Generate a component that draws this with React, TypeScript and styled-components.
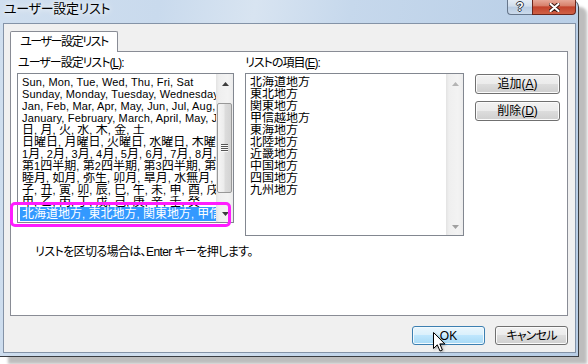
import React from "react";
import styled, { createGlobalStyle } from "styled-components";

const GlobalStyle = createGlobalStyle`
  html, body { margin: 0; padding: 0; background: #ffffff; }
  body {
    font-family: "Liberation Sans", "Noto Sans CJK JP", sans-serif;
    font-size: 12px;
    font-feature-settings: "palt";
    color: #000;
  }
  #root { width: 588px; height: 364px; overflow: hidden; }
`;

const Window = styled.div`
  position: relative;
  box-sizing: border-box;
  width: 579px;
  height: 357px;
  padding: 0 2px 3px 3px;
  display: flex;
  flex-direction: column;
  border-right: 1px solid #3a3d42;
  border-bottom: 1px solid #3a3d42;
  border-top-right-radius: 7px;
  background: linear-gradient(100deg, #d0dfef 0%, #c9daed 25%, #d8e4f1 40%, #c6d8ec 55%, #bcd1e8 80%, #b9cee6 100%);
  box-shadow: 8px 7px 3px rgba(0, 0, 0, 0.26);
`;

const TitleBar = styled.div`
  flex: none;
  height: 23px;
  display: flex;
  justify-content: space-between;
  align-items: flex-start;
`;

const Title = styled.div`
  font-size: 13px;
  line-height: 18px;
  padding-left: 1px;
  letter-spacing: -0.3px;
  white-space: nowrap;
  text-shadow: 0 0 5px rgba(255, 255, 255, 0.95), 0 0 10px rgba(255, 255, 255, 0.8);
`;

const Caption = styled.div`
  display: flex;
`;

const HelpButton = styled.div`
  box-sizing: border-box;
  width: 25px;
  height: 15px;
  border: 1px solid #66768b;
  border-top: none;
  border-right: none;
  border-bottom-left-radius: 4px;
  background: linear-gradient(to bottom, #e4ecf5 0%, #d0ddec 45%, #b9cce2 50%, #cbdaeb 100%);
  display: flex;
  align-items: center;
  justify-content: center;
  font: bold 12px "Liberation Sans", sans-serif;
  line-height: 13px;
  color: #fff;
  text-shadow: 1px 0 #2c3440, -1px 0 #2c3440, 0 1px #2c3440, 0 -1px #2c3440;
`;

const CloseButton = styled.div`
  box-sizing: border-box;
  width: 44px;
  height: 15px;
  border: 1px solid #6b261c;
  border-top: none;
  border-bottom-right-radius: 4px;
  background: linear-gradient(to bottom, #e7a898 0%, #d8826d 40%, #c3432c 50%, #cf6146 100%);
  display: flex;
  align-items: center;
  justify-content: center;
`;

const Client = styled.div`
  flex: 1;
  box-sizing: border-box;
  border: 1px solid #8493a7;
  background: #f0f0f0;
  padding: 7px 7px 0 6px;
  display: flex;
  flex-direction: column;
`;

const TabStrip = styled.div`
  display: flex;
  height: 20px;
  position: relative;
  z-index: 1;
`;

const Tab = styled.div`
  box-sizing: border-box;
  width: 108px;
  height: 21px;
  border: 1px solid #898c95;
  border-bottom: none;
  border-radius: 2px 2px 0 0;
  background: #fff;
  display: flex;
  align-items: center;
  justify-content: center;
  line-height: 20px;
  letter-spacing: -1.4px;
  white-space: nowrap;
`;

const Panel = styled.div`
  box-sizing: border-box;
  height: 265px;
  border: 1px solid #898c95;
  background: #fff;
  padding: 4px 0 0 6px;
  display: flex;
  flex-direction: column;
`;

const Columns = styled.div`
  display: grid;
  grid-template-columns: 217px 219px 85px;
  column-gap: 11px;
  align-items: start;
`;

const Field = styled.div`
  position: relative;
  display: flex;
  flex-direction: column;
  gap: 3px;
`;

const Label = styled.div<{ $indent?: number }>`
  height: 14px;
  line-height: 14px;
  padding-left: ${(p) => p.$indent ?? 0}px;
  letter-spacing: -1px;
  white-space: nowrap;
`;

const Mn = styled.span`
  text-decoration: underline;
`;

const ListBox = styled.div<{ $h: number }>`
  box-sizing: border-box;
  height: ${(p) => p.$h}px;
  border: 1px solid #828790;
  background: #fff;
  display: flex;
`;

const Items = styled.div`
  flex: 1;
  min-width: 0;
  overflow: hidden;
  padding: 2px 0 0 2px;
`;

const Row = styled.div<{ $selected?: boolean }>`
  height: ${(p) => (p.$selected ? 14 : 12)}px;
  line-height: ${(p) => (p.$selected ? 14 : 12)}px;
  margin-top: ${(p) => (p.$selected ? -1 : 0)}px;
  padding-left: 2px;
  white-space: nowrap;
  overflow: hidden;
  position: relative;
  background: ${(p) => (p.$selected ? "#3399ff" : "transparent")};
  color: ${(p) => (p.$selected ? "#fff" : "#000")};
`;

const Latin = styled.span`
  font-size: 11px;
  letter-spacing: 0.15px;
`;

const ScrollBar = styled.div`
  flex: none;
  width: 17px;
  display: flex;
  flex-direction: column;
  background: linear-gradient(to right, #e3e3e3 0, #efefef 3px, #f3f3f3 12px, #ececec 100%);
`;

const ArrowCell = styled.div<{ $shift?: number }>`
  height: 17px;
  flex: none;
  display: flex;
  align-items: center;
  justify-content: center;
  padding-left: 1px;
  padding-top: ${(p) => p.$shift ?? 0}px;
  box-sizing: border-box;
`;

const Track = styled.div`
  flex: 1;
  display: flex;
  flex-direction: column;
`;

const Thumb = styled.div`
  box-sizing: border-box;
  margin: 12px 1px 0 1px;
  height: 90px;
  border: 1px solid #989898;
  border-radius: 2px;
  background: linear-gradient(to right, #f6f6f6 0%, #ececec 45%, #dcdcdc 55%, #d3d3d3 100%);
  display: flex;
  align-items: center;
  justify-content: center;
`;

const Grip = styled.div`
  width: 7px;
  height: 8px;
  background: repeating-linear-gradient(to bottom, #555 0 1px, #fafafa 1px 2px);
`;

const ButtonStack = styled.div`
  display: flex;
  flex-direction: column;
  gap: 7px;
  padding-top: 18px;
`;

const PushButton = styled.div<{ $w: number; $h: number; $hot?: boolean; $ls?: number }>`
  position: relative;
  box-sizing: border-box;
  width: ${(p) => p.$w}px;
  height: ${(p) => p.$h}px;
  border: 1px solid ${(p) => (p.$hot ? "#3c7fb1" : "#707070")};
  border-radius: 3px;
  box-shadow: inset 0 0 0 1px ${(p) => (p.$hot ? "#f2fafe" : "#fbfbfb")};
  background: ${(p) =>
    p.$hot
      ? "linear-gradient(to bottom, #eaf6fd 0%, #d9f0fc 50%, #bee6fd 50%, #a7d9f5 100%)"
      : "linear-gradient(to bottom, #f2f2f2 0%, #ebebeb 50%, #dddddd 50%, #cfcfcf 100%)"};
  display: flex;
  align-items: center;
  justify-content: center;
  white-space: nowrap;
  line-height: 14px;
  letter-spacing: ${(p) => p.$ls ?? 0}px;
`;

const Note = styled.div`
  margin-top: 9px;
  padding-left: 18px;
  line-height: 14px;
  letter-spacing: -0.6px;
  white-space: nowrap;
`;

const ButtonRow = styled.div`
  display: flex;
  justify-content: flex-end;
  gap: 10px;
  margin-top: 10px;
`;

const Annotation = styled.div`
  position: absolute;
  left: -7px;
  top: 146px;
  width: 221px;
  height: 25px;
  box-sizing: border-box;
  border: 3px solid #ff1cff;
  border-radius: 5px;
  pointer-events: none;
`;

const Cursor = styled.svg`
  position: absolute;
  left: 20px;
  top: 5px;
  width: 14px;
  height: 21px;
  overflow: visible;
  filter: drop-shadow(1px 1px 1px rgba(0, 0, 0, 0.3));
`;

const Arrow = ({ up, color }: { up?: boolean; color: string }) => (
  <svg width="7" height="4" viewBox="0 0 7 4">
    <path d={up ? "M3.5 0 L7 4 H0 Z" : "M0 0 H7 L3.5 4 Z"} fill={color} />
  </svg>
);

const Mixed = ({ text }: { text: string }) => (
  <>
    {text.split(/([\x20-\x7E]+)/).map((part, i) =>
      /[\x20-\x7E]/.test(part) ? <Latin key={i}>{part}</Latin> : <React.Fragment key={i}>{part}</React.Fragment>
    )}
  </>
);

const customLists = [
  "Sun, Mon, Tue, Wed, Thu, Fri, Sat",
  "Sunday, Monday, Tuesday, Wednesday, Thursday, Friday, Saturday",
  "Jan, Feb, Mar, Apr, May, Jun, Jul, Aug, Sep, Oct, Nov, Dec",
  "January, February, March, April, May, June, July, August, September, October, November, December",
  "日, 月, 火, 水, 木, 金, 土",
  "日曜日, 月曜日, 火曜日, 水曜日, 木曜日, 金曜日, 土曜日",
  "1月, 2月, 3月, 4月, 5月, 6月, 7月, 8月, 9月, 10月, 11月, 12月",
  "第1四半期, 第2四半期, 第3四半期, 第4四半期",
  "睦月, 如月, 弥生, 卯月, 皐月, 水無月, 文月, 葉月, 長月, 神無月, 霜月, 師走",
  "子, 丑, 寅, 卯, 辰, 巳, 午, 未, 申, 酉, 戌, 亥",
  "甲, 乙, 丙, 丁, 戊, 己, 庚, 辛, 壬, 癸",
];

const regions = ["北海道地方", "東北地方", "関東地方", "甲信越地方", "東海地方", "北陸地方", "近畿地方", "中国地方", "四国地方", "九州地方"];

export default function App() {
  return (
    <>
      <GlobalStyle />
      <Window>
        <TitleBar>
          <Title>ユーザー設定リスト</Title>
          <Caption>
            <HelpButton>?</HelpButton>
            <CloseButton>
              <svg width="11" height="9" viewBox="0 0 11 9">
                <path d="M1.5 1 L9.5 8 M9.5 1 L1.5 8" stroke="#3a1610" strokeWidth="4" strokeLinecap="round" />
                <path d="M1.5 1 L9.5 8 M9.5 1 L1.5 8" stroke="#ffffff" strokeWidth="2.2" strokeLinecap="round" />
              </svg>
            </CloseButton>
          </Caption>
        </TitleBar>
        <Client>
          <TabStrip>
            <Tab>ユーザー設定リスト</Tab>
          </TabStrip>
          <Panel>
            <Columns>
              <Field>
                <Label $indent={1}>
                  ユーザー設定リスト(<Mn>L</Mn>):
                </Label>
                <ListBox $h={150}>
                  <Items>
                    {customLists.map((t) => (
                      <Row key={t}>
                        <Mixed text={t} />
                      </Row>
                    ))}
                    <Row $selected>
                      <Mixed text={regions.join(", ")} />
                    </Row>
                  </Items>
                  <ScrollBar>
                    <ArrowCell $shift={2}>
                      <Arrow up color="#3d3d3d" />
                    </ArrowCell>
                    <Track>
                      <Thumb>
                        <Grip />
                      </Thumb>
                    </Track>
                    <ArrowCell>
                      <Arrow color="#3d3d3d" />
                    </ArrowCell>
                  </ScrollBar>
                </ListBox>
                <Annotation />
              </Field>
              <Field>
                <Label>
                  リストの項目(<Mn>E</Mn>):
                </Label>
                <ListBox $h={163}>
                  <Items>
                    {regions.map((r) => (
                      <Row key={r}>{r}</Row>
                    ))}
                  </Items>
                  <ScrollBar>
                    <ArrowCell $shift={2}>
                      <Arrow up color="#b4b4b4" />
                    </ArrowCell>
                    <Track />
                    <ArrowCell>
                      <Arrow color="#a0a0a0" />
                    </ArrowCell>
                  </ScrollBar>
                </ListBox>
              </Field>
              <ButtonStack>
                <PushButton $w={85} $h={20}>
                  追加(<Mn>A</Mn>)
                </PushButton>
                <PushButton $w={85} $h={20}>
                  削除(<Mn>D</Mn>)
                </PushButton>
              </ButtonStack>
            </Columns>
            <Note>リストを区切る場合は、Enter キーを押します。</Note>
          </Panel>
          <ButtonRow>
            <PushButton $w={73} $h={19} $hot>
              OK
              <Cursor viewBox="0 0 14 21">
                <path d="M0.5 0.5 V16.5 L4.3 12.8 L7 19 L9.4 18 L6.8 11.9 H11.8 Z" fill="#fff" stroke="#000" strokeWidth="1" strokeLinejoin="miter" />
              </Cursor>
            </PushButton>
            <PushButton $w={73} $h={19} $ls={-0.8}>
              キャンセル
            </PushButton>
          </ButtonRow>
        </Client>
      </Window>
    </>
  );
}
